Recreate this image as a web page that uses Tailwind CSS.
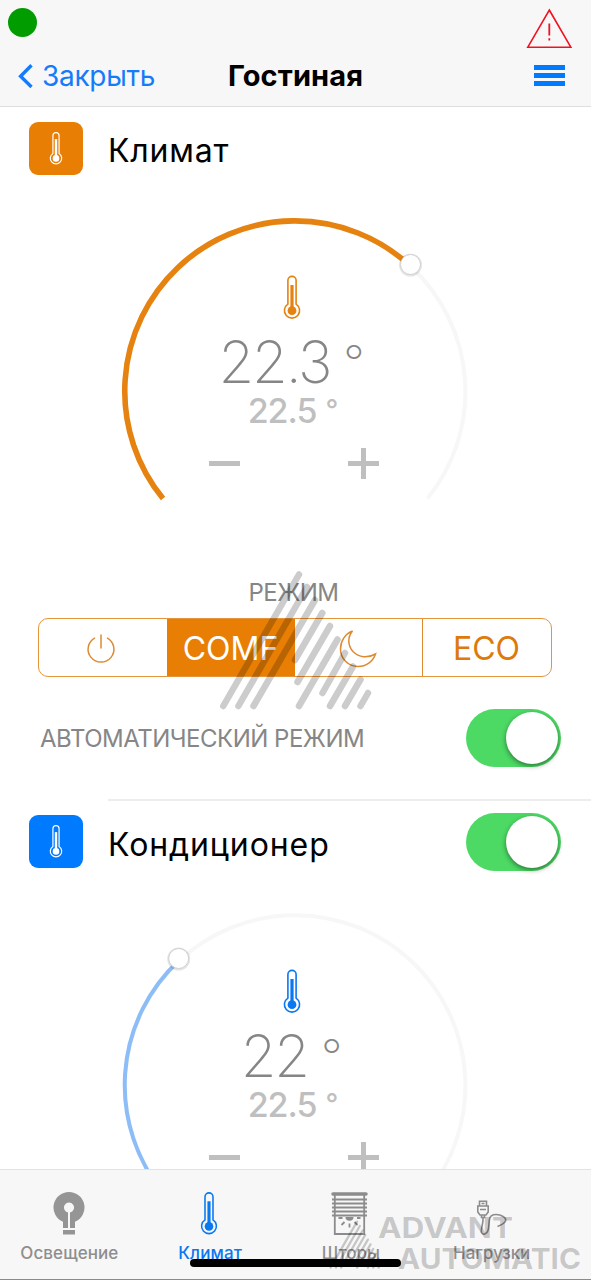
<!DOCTYPE html>
<html lang="ru">
<head>
<meta charset="utf-8">
<title>Гостиная</title>
<script src="https://cdn.jsdelivr.net/npm/@tailwindcss/browser@4"></script>
</head>
<body class="bg-white font-['Inter','Noto_Sans',sans-serif]">
<svg class="hidden">
  <symbol id="thermo" viewBox="0 0 18 44">
    <path d="M4.9 5a4.1 4.1 0 0 1 8.2 0V28.6A7.6 7.6 0 1 1 4.9 28.6Z" fill="none" stroke="currentColor" stroke-width="1.6"/>
    <path d="M9 9.5V35" stroke="currentColor" stroke-width="3.2"/>
    <circle cx="9" cy="35.2" r="4.4" fill="currentColor"/>
  </symbol>
  <symbol id="mark" viewBox="219 570 154 140">
    <path d="M223.3 706 299 574.5M238.4 706 307 587M253.5 706 315 600M295 660 322.3 613M297.5 682 330 626M299 706 337.5 639.5M322.5 693 345 653M330 706 353 666.5M345 706 360.5 679.5M360.5 706 368 693" fill="none" stroke="currentColor" stroke-width="6.5" stroke-linecap="round"/>
  </symbol>
</svg>
<div class="relative flex h-[1280px] w-[591px] flex-col overflow-hidden">
  <header class="flex h-[107px] shrink-0 flex-col border-b border-[#dedede] bg-[#f7f7f7]">
    <div class="flex h-[50px] items-start justify-between pl-2 pr-[18px] pt-2">
      <div class="size-[29px] rounded-full bg-[#009c00]"></div>
      <svg class="h-[41px] w-[47px]" viewBox="0 0 47 41" fill="none" stroke="#f01220" stroke-width="1.6">
        <path d="M23.3 2 44.8 39.2H1.8Z"/><path d="M23.3 15.5V27.5M23.3 30.3V32.6" stroke-width="1.8"/>
      </svg>
    </div>
    <div class="grid h-[52px] grid-cols-3 items-center">
      <div class="flex items-center gap-[9px] pl-[18px] text-[#147cfb]">
        <svg class="h-[24px] w-[15px]" viewBox="0 0 15 24" fill="none" stroke="currentColor" stroke-width="3.4"><path d="M13.5 1.2 2.6 12.2 13.5 23"/></svg>
        <span class="whitespace-nowrap text-[28px] leading-none tracking-[-0.3px]">Закрыть</span>
      </div>
      <h1 class="whitespace-nowrap pb-[2px] text-center text-[29px] font-bold leading-none tracking-[0.1px] text-black">Гостиная</h1>
      <div class="flex flex-col items-end gap-[3px] pb-[2px] pr-[26px]">
        <i class="h-[5px] w-[31px] bg-[#007aff]"></i><i class="h-[5px] w-[31px] bg-[#007aff]"></i><i class="h-[5px] w-[31px] bg-[#007aff]"></i>
      </div>
    </div>
  </header>

  <main class="min-h-0 flex-1 overflow-hidden">
    <section class="h-[692px]">
      <div class="flex h-[93px] items-start gap-[25px] pl-[29px] pt-[15px]">
        <div class="flex h-[53px] w-[54px] items-center justify-center rounded-[9px] bg-[#e87e04] text-white"><svg class="h-[33px] w-[14px]"><use href="#thermo"/></svg></div>
        <h2 class="pt-[2px] text-[32px] leading-[54px] tracking-[0.8px] text-black">Климат</h2>
      </div>
      <div class="grid h-[370px] w-[591px]">
        <svg class="[grid-area:1/1]" width="591" height="370" viewBox="0 200 591 370" fill="none">
          <path d="M163 498.6A170.2 170.2 0 1 1 427.4 498.6" stroke="#f7f7f7" stroke-width="4"/>
          <path d="M163 498.6A170.2 170.2 0 0 1 409.7 265.4" stroke="#e6820f" stroke-width="5.6"/>
          <circle cx="410.5" cy="265" r="11.5" fill="#000" fill-opacity=".1"/>
          <circle cx="410.5" cy="264.5" r="10" fill="#fff" stroke="#cfcfcf"/>
        </svg>
        <div class="[grid-area:1/1] flex w-[583px] flex-col items-center pt-[75px]">
          <svg class="h-[45px] w-[18px] text-[#e6820f]"><use href="#thermo"/></svg>
          <div class="mt-[13px] flex h-[58px] whitespace-nowrap text-[58px] font-extralight leading-[59px] tracking-[-2.2px] text-[#868686]">22.3<span class="ml-[13px] text-[47px] leading-[57px] tracking-normal">°</span></div>
          <div class="ml-[3px] mt-[2px] flex h-[36px] whitespace-nowrap text-[34px] font-medium leading-[36px] tracking-[-1px] text-[#bfbfbf]">22.5<span class="ml-[9px] text-[28px] leading-[34px] tracking-normal">°</span></div>
          <svg class="ml-[6px] mt-[18px] h-[32px] w-[171px]" viewBox="0 0 171 32" stroke="#bfbfbf" stroke-width="5"><path d="M0 16.5H31M139 16.5H170M154.5 1V32"/></svg>
        </div>
      </div>
      <div class="-ml-1 text-center text-[24px] leading-[46px] tracking-[-0.5px] text-[#868686]">РЕЖИМ</div>
      <div class="ml-[37.5px] mt-[2px] grid h-[59px] w-[514px] grid-cols-4 overflow-hidden rounded-[10px] border border-[#e6943a] text-center text-[32px] leading-[59px] text-[#dd7a0c]">
        <div class="flex items-center justify-center pr-[3px]"><svg class="h-[31px] w-[30px]" viewBox="0 0 30 31" fill="none" stroke="#dd8a30" stroke-width="1.5"><path d="M9 4.8A12.9 12.9 0 1 0 21 4.8M15 1.5V15.5"/></svg></div>
        <div class="bg-[#e87e04] text-white">COMF</div>
        <div class="flex items-center justify-center border-r border-[#e08a30]"><svg class="h-[38px] w-[38px]" viewBox="0 0 38 38" fill="none" stroke="#dd8a30" stroke-width="1.5"><path d="M13.5 1C8.500 7 8.500 15.500 14 21.500 20 27.500 28.500 28.500 36.500 24 34 31.500 27 36.500 19 36.500 9 36.500 1.500 28.500 1.500 19 1.500 11 6 4 13.500 1Z"/></svg></div>
        <div>ECO</div>
      </div>
      <div class="flex h-[122px] items-start justify-between pl-[40px] pr-[30px] pt-[32px]">
        <div class="pt-px text-[24px] leading-[58px] tracking-[-0.5px] text-[#868686]">АВТОМАТИЧЕСКИЙ РЕЖИМ</div>
        <div class="flex h-[58px] w-[95px] items-center justify-end rounded-full bg-[#4cd964] pr-[3px]"><i class="size-[52px] rounded-full bg-white shadow-[0_2px_5px_rgba(0,0,0,.45)]"></i></div>
      </div>
    </section>
    <section>
      <div class="ml-[108px] h-[2px] bg-[#ededee]"></div>
      <div class="flex h-[93px] items-start pl-[29px] pr-[30px] pt-[12px]">
        <div class="mt-[2px] flex h-[53px] w-[54px] items-center justify-center rounded-[9px] bg-[#007aff] text-white"><svg class="h-[33px] w-[14px]"><use href="#thermo"/></svg></div>
        <h2 class="ml-[25px] flex-1 pt-[5px] text-[32px] leading-[54px] tracking-[0.9px] text-black">Кондиционер</h2>
        <div class="flex h-[58px] w-[95px] items-center justify-end rounded-full bg-[#4cd964] pr-[3px]"><i class="size-[52px] rounded-full bg-white shadow-[0_2px_5px_rgba(0,0,0,.45)]"></i></div>
      </div>
      <div class="grid h-[370px] w-[591px]">
        <svg class="[grid-area:1/1]" width="591" height="370" viewBox="0 200 591 370" fill="none">
          <path d="M163 498.6A170.2 170.2 0 1 1 427.4 498.6" stroke="#f7f7f7" stroke-width="4"/>
          <path d="M163 498.6A170.2 170.2 0 0 1 179.5 266" stroke="#8cbdf6" stroke-width="4"/>
          <circle cx="178.7" cy="265" r="11.5" fill="#000" fill-opacity=".1"/>
          <circle cx="178.7" cy="264.5" r="10" fill="#fff" stroke="#cfcfcf"/>
        </svg>
        <div class="[grid-area:1/1] flex w-[583px] flex-col items-center pt-[75px]">
          <svg class="h-[45px] w-[18px] text-[#0a78f0]"><use href="#thermo"/></svg>
          <div class="mt-[13px] flex h-[58px] whitespace-nowrap text-[58px] font-extralight leading-[59px] tracking-[-2.2px] text-[#868686]">22<span class="ml-[13px] text-[47px] leading-[57px] tracking-normal">°</span></div>
          <div class="ml-[3px] mt-[2px] flex h-[36px] whitespace-nowrap text-[34px] font-medium leading-[36px] tracking-[-1px] text-[#bfbfbf]">22.5<span class="ml-[9px] text-[28px] leading-[34px] tracking-normal">°</span></div>
          <svg class="ml-[6px] mt-[18px] h-[32px] w-[171px]" viewBox="0 0 171 32" stroke="#bfbfbf" stroke-width="5"><path d="M0 16.5H31M139 16.5H170M154.5 1V32"/></svg>
        </div>
      </div>
    </section>
  </main>

  <nav class="h-[111px] shrink-0 border-b border-t border-b-[#8a8a8a] border-t-[#e2e2e2] bg-[#f7f7f7] text-[17px] font-medium text-[#8e8e8e]">
    <div class="-ml-px grid w-[563px] grid-cols-4 pt-[22px]">
      <div class="flex flex-col items-center">
        <svg class="h-[43px] w-[32px]" viewBox="0 0 32 43"><path fill="#959595" fill-rule="evenodd" d="M16 0a15.5 15.5 0 0 1 6 29.8V36H17V20.4a5 5 0 1 0-2 0V36H10V29.8A15.5 15.5 0 0 1 16 0ZM10 38H22V42.5H10Z"/></svg>
        <span class="leading-[37px] tracking-[0.1px]">Освещение</span>
      </div>
      <div class="flex flex-col items-center text-[#0a78f0]">
        <svg class="mr-[3px] h-[43px] w-[18px]"><use href="#thermo"/></svg>
        <span class="leading-[37px] tracking-[0.1px]">Климат</span>
      </div>
      <div class="flex flex-col items-center">
        <svg class="mr-[3px] h-[43px] w-[37px]" viewBox="0 0 37 43" fill="none" stroke="#8c8c8c" stroke-width="1.8">
          <path d="M2 2H35" stroke-width="3.5" stroke-linecap="round"/>
          <path d="M1 7.5H36M1 11.5H36M1 15.5H36M1 19.5H36M1 23.5H36M3.8 3V42H33.2V3"/>
          <path d="M14.5 25a4 3.8 0 0 0 8 0Z" fill="#8c8c8c" stroke="none"/>
          <path d="M7.5 26H11.5M26 26H29.5M10.5 33 13.5 30M26.5 33 23.5 30M18.5 31.5V35.5"/>
        </svg>
        <span class="leading-[37px]">Шторы</span>
      </div>
      <div class="flex flex-col items-center">
        <svg class="mr-[2px] h-[43px] w-[32px]" viewBox="0 0 32 43" fill="none" stroke="#8c8c8c" stroke-width="1.6">
          <path d="M4.5 14V9.3H11.5V14M6.5 11.5H9.5M2.8 14H13.2V20L11 23H5L2.8 20ZM5 17.5H11M6.5 23V25.5H9.5V23"/>
          <path d="M8 25.5C8.5 32 5.5 37 6.5 40.5 8 43.5 12 42 13 38.5 15 32 12.5 24 18.5 22.7 25 21.5 34 26 29.5 30.5 27.5 32.5 25 33.5 22.5 34.5"/>
        </svg>
        <span class="leading-[37px] tracking-[-0.1px]">Нагрузки</span>
      </div>
    </div>
  </nav>

  <svg class="absolute left-[219px] top-[570px] h-[140px] w-[154px] text-black/20"><use href="#mark"/></svg>
  <svg class="absolute left-[329px] top-[1220px] h-[49px] w-[54px] text-black/20"><use href="#mark"/></svg>
  <svg class="absolute left-[370px] top-[1206px] h-[74px] w-[221px] text-[28px] font-bold" fill="#000" fill-opacity=".2">
    <text x="8" y="32" textLength="135" lengthAdjust="spacingAndGlyphs">ADVANT</text>
    <text x="28" y="63" textLength="183" lengthAdjust="spacingAndGlyphs">AUTOMATIC</text>
  </svg>
  <div class="absolute left-[190px] top-[1259px] h-[8px] w-[211px] rounded-full bg-black"></div>
</div>
</body>
</html>
